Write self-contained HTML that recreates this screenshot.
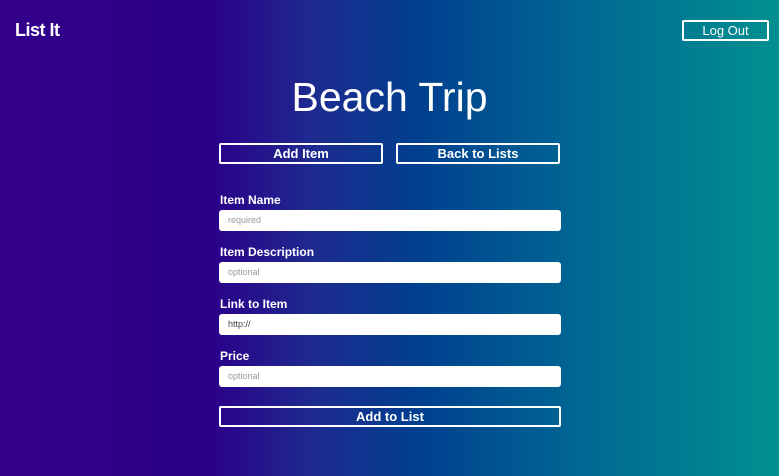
<!DOCTYPE html>
<html><head><meta charset="utf-8"><style>
*{box-sizing:border-box;margin:0;padding:0}
html,body{width:779px;height:476px;overflow:hidden}
body{font-family:"Liberation Sans",sans-serif;color:#fff;position:relative;
background:linear-gradient(90deg,#33008a 0%,#2b0089 27%,#1e2a8f 40%,#00408f 54%,#006893 75%,#009090 100%)}
.logo{position:absolute;left:15px;top:20px;font-size:18px;font-weight:bold;letter-spacing:-0.5px}
.btn{position:absolute;border:2px solid #fff;border-radius:2px;color:#fff;font-weight:bold;font-size:13px;text-align:center;line-height:17px}
h1{position:absolute;left:0;width:779px;top:74px;text-align:center;font-weight:normal;font-size:41px}
.lbl{position:absolute;left:220px;font-size:12px;font-weight:bold}
.in{position:absolute;left:219px;width:342px;height:21px;background:#fff;border-radius:3px;color:#999;font-size:9px;line-height:21px;padding-left:9px}
</style></head><body>
<div class="logo">List It</div>
<div class="btn" style="left:682px;top:20px;width:87px;height:21px;font-weight:normal;font-size:13px">Log Out</div>
<h1>Beach Trip</h1>
<div class="btn" style="left:219px;top:143px;width:164px;height:21px">Add Item</div>
<div class="btn" style="left:396px;top:143px;width:164px;height:21px">Back to Lists</div>
<div class="lbl" style="top:193px">Item Name</div>
<div class="in" style="top:210px">required</div>
<div class="lbl" style="top:245px">Item Description</div>
<div class="in" style="top:262px">optional</div>
<div class="lbl" style="top:297px">Link to Item</div>
<div class="in" style="top:314px;color:#444">http://</div>
<div class="lbl" style="top:349px">Price</div>
<div class="in" style="top:366px">optional</div>
<div class="btn" style="left:219px;top:406px;width:342px;height:21px">Add to List</div>
</body></html>
